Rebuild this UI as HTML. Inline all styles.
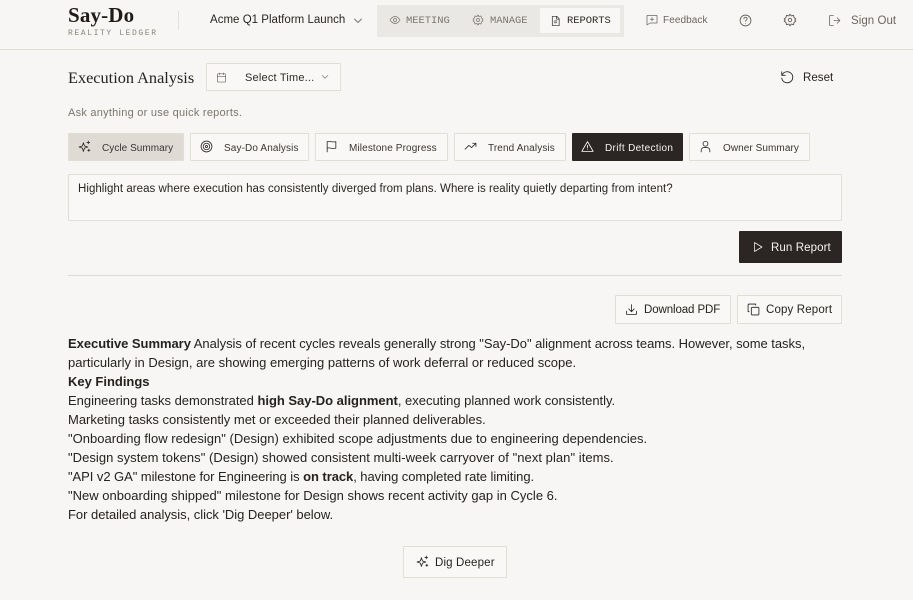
<!DOCTYPE html>
<html><head><meta charset="utf-8"><style>
html,body{margin:0;padding:0}
body{width:913px;height:600px;overflow:hidden;background:#f7f6f4;position:relative;font-family:"Liberation Sans",sans-serif;color:#231f1c}
.t{position:absolute;white-space:nowrap;line-height:1}
.b{position:absolute;box-sizing:border-box;border:1px solid #e2ded6;border-radius:1px;background:#f9f8f6}
svg{position:absolute;fill:none;stroke:currentColor;stroke-width:1.5;stroke-linecap:round;stroke-linejoin:round}
.q{font-size:10px;letter-spacing:.12px;top:144px;color:#3a3531}
.l{left:68px;font-size:13px;letter-spacing:-.01px;color:#26221f;height:19px;line-height:19px}
.l b{font-weight:700}
.m{font-family:"Liberation Mono",monospace;font-size:10.5px;letter-spacing:-.05px;top:16px}
</style></head><body>
<div style="position:absolute;left:0;top:49px;width:913px;height:1px;background:#dfdcd6"></div>
<div class="t" style="left:68px;top:3px;font:700 21px 'Liberation Serif',serif;letter-spacing:.15px;color:#1f1b18">Say-Do</div>
<div class="t" style="left:68px;top:29px;font:8px 'Liberation Mono',monospace;letter-spacing:1.6px;color:#8a847c">REALITY LEDGER</div>
<div style="position:absolute;left:178px;top:11px;width:1px;height:19px;background:#e2ded8"></div>
<div class="t" style="left:210px;top:15px;font-size:11.5px;letter-spacing:.02px;color:#292522">Acme Q1 Platform Launch</div>
<svg style="left:352px;top:15px;color:#4a4540" width="12" height="12" viewBox="0 0 24 24"><path d="M5 8l7 7 7-7"/></svg>
<div style="position:absolute;left:377px;top:5px;width:247px;height:32px;background:#e9e8e5"></div>
<div style="position:absolute;left:540px;top:8px;width:80px;height:25px;background:#f8f7f5"></div>
<svg style="left:389px;top:14px;color:#7b756e" width="12" height="12" viewBox="0 0 24 24" stroke-width="2"><path d="M2 12s4-7 10-7 10 7 10 7-4 7-10 7-10-7-10-7z"/><circle cx="12" cy="12" r="3"/></svg>
<div class="t m" style="left:406px;color:#7b756e">MEETING</div>
<svg style="left:472px;top:14px;color:#7b756e" width="12" height="12" viewBox="0 0 24 24" stroke-width="2"><circle cx="12" cy="12" r="3"/><path d="M12 2l2 3 4-1 1 4 3 2-2 2 2 2-3 2-1 4-4-1-2 3-2-3-4 1-1-4-3-2 2-2-2-2 3-2 1-4 4 1z"/></svg>
<div class="t m" style="left:490px;color:#7b756e">MANAGE</div>
<svg style="left:550px;top:15px;color:#2a2623" width="11" height="12" viewBox="0 0 24 24" stroke-width="2.2"><path d="M5 2h10l5 5v15H5z"/><path d="M14 2v6h6M9 12h6M9 16h6"/></svg>
<div class="t m" style="left:567px;color:#2a2623">REPORTS</div>
<svg style="left:646px;top:14px;color:#6c665f" width="12" height="12" viewBox="0 0 24 24" stroke-width="2"><path d="M2 3h20v15H8l-6 4z"/><path d="M12 7v7M8.5 10.5h7"/></svg>
<div class="t" style="left:663px;top:16px;font-size:10px;letter-spacing:.08px;color:#6c665f">Feedback</div>
<svg style="left:739px;top:14px;color:#5c5650" width="13" height="13" viewBox="0 0 24 24" stroke-width="1.8"><circle cx="12" cy="12" r="10"/><path d="M9 9a3 3 0 0 1 6 0c0 2-3 2.5-3 4.5M12 17.5v.1"/></svg>
<svg style="left:783px;top:13px;color:#5c5650" width="14" height="14" viewBox="0 0 24 24" stroke-width="1.8"><circle cx="12" cy="12" r="3"/><path d="M12 2l2 3 4-1 1 4 3 2-2 2 2 2-3 2-1 4-4-1-2 3-2-3-4 1-1-4-3-2 2-2-2-2 3-2 1-4 4 1z"/></svg>
<svg style="left:828px;top:14px;color:#6c665f" width="13" height="13" viewBox="0 0 24 24" stroke-width="1.8"><path d="M10 3H3v18h7M11 12h11M17 7l5 5-5 5"/></svg>
<div class="t" style="left:851px;top:16px;font-size:11.5px;letter-spacing:.05px;color:#6c665f">Sign Out</div>

<div class="t" style="left:68px;top:68px;font:16.3px 'Liberation Serif',serif;color:#26221f">Execution Analysis</div>
<div class="b" style="left:206px;top:63px;width:135px;height:28px"></div>
<svg style="left:216px;top:72px;color:#6d675f" width="11" height="11" viewBox="0 0 24 24" stroke-width="2"><rect x="3" y="4" width="18" height="18" rx="2"/><path d="M3 10h18M8 2v4M16 2v4"/></svg>
<div class="t" style="left:245px;top:73px;font-size:11px;letter-spacing:.2px;color:#2f2b27">Select Time...</div>
<svg style="left:320px;top:72px;color:#6d675f" width="10" height="10" viewBox="0 0 24 24"><path d="M5 8l7 7 7-7"/></svg>
<svg style="left:780px;top:70px;color:#26221f" width="14" height="14" viewBox="0 0 24 24" stroke-width="2"><path d="M3 3v6h6"/><path d="M3.5 9A9.5 9.5 0 1 1 3 14"/></svg>
<div class="t" style="left:803px;top:73px;font-size:11.5px;letter-spacing:.05px;color:#26221f">Reset</div>
<div class="t" style="left:68px;top:108px;font-size:11px;letter-spacing:.25px;color:#7b756e">Ask anything or use quick reports.</div>

<div class="b" style="left:68px;top:133px;width:116px;height:28px;background:#dfdbd4"></div>
<svg style="left:78px;top:140px;color:#2a2623" width="13" height="13" viewBox="0 0 24 24" stroke-width="2"><path d="M10 5l2 6 6 2-6 2-2 6-2-6-6-2 6-2z"/><path d="M19 2v5M16.5 4.5h5M20 17v4M18 19h4"/></svg>
<div class="t q" style="left:102px;letter-spacing:.05px">Cycle Summary</div>
<div class="b" style="left:190px;top:133px;width:119px;height:28px"></div>
<svg style="left:200px;top:140px;color:#2a2623" width="13" height="13" viewBox="0 0 24 24" stroke-width="2"><circle cx="12" cy="12" r="10"/><circle cx="12" cy="12" r="6"/><circle cx="12" cy="12" r="2"/></svg>
<div class="t q" style="left:224px">Say-Do Analysis</div>
<div class="b" style="left:315px;top:133px;width:133px;height:28px"></div>
<svg style="left:325px;top:140px;color:#2a2623" width="13" height="13" viewBox="0 0 24 24" stroke-width="2"><path d="M4 22V3c5-2 8 2 16 0v12c-8 2-11-2-16 0"/></svg>
<div class="t q" style="left:349px">Milestone Progress</div>
<div class="b" style="left:454px;top:133px;width:112px;height:28px"></div>
<svg style="left:464px;top:140px;color:#2a2623" width="13" height="13" viewBox="0 0 24 24" stroke-width="2"><path d="M2 17l7-7 5 4 8-8M16 6h6v6"/></svg>
<div class="t q" style="left:488px">Trend Analysis</div>
<div class="b" style="left:572px;top:133px;width:111px;height:28px;background:#2b2623;border-color:#2b2623"></div>
<svg style="left:581px;top:140px;color:#fff" width="13" height="13" viewBox="0 0 24 24" stroke-width="2"><path d="M12 3L1.5 21h21z"/><path d="M12 10v5M12 18v.1"/></svg>
<div class="t q" style="left:605px;color:#f5f3f0;letter-spacing:.33px">Drift Detection</div>
<div class="b" style="left:689px;top:133px;width:121px;height:28px"></div>
<svg style="left:699px;top:140px;color:#2a2623" width="13" height="13" viewBox="0 0 24 24" stroke-width="2"><circle cx="12" cy="7" r="4.5"/><path d="M4 22v-3a5 5 0 0 1 5-5h6a5 5 0 0 1 5 5v3"/></svg>
<div class="t q" style="left:723px;letter-spacing:.07px">Owner Summary</div>

<div class="b" style="left:68px;top:174px;width:774px;height:47px"></div>
<div class="t" style="left:78px;top:184px;font-size:11.5px;letter-spacing:.04px;color:#2a2623">Highlight areas where execution has consistently diverged from plans. Where is reality quietly departing from intent?</div>

<div style="position:absolute;left:739px;top:231px;width:103px;height:32px;background:#2b2623;border-radius:1px"></div>
<svg style="left:752px;top:241px;color:#f5f3f0" width="12" height="12" viewBox="0 0 24 24" stroke-width="2"><path d="M5 3l15 9-15 9z"/></svg>
<div class="t" style="left:771px;top:243px;font-size:11.5px;letter-spacing:.1px;color:#f5f3f0">Run Report</div>
<div style="position:absolute;left:68px;top:275px;width:774px;height:1px;background:#dfdbd3"></div>

<div class="b" style="left:615px;top:295px;width:116px;height:29px"></div>
<svg style="left:625px;top:303px;color:#26221f" width="13" height="13" viewBox="0 0 24 24" stroke-width="2"><path d="M3 15v6h18v-6M12 3v13M7 11l5 5 5-5"/></svg>
<div class="t" style="left:644px;top:305px;font-size:11.5px;letter-spacing:-.1px;color:#26221f">Download PDF</div>
<div class="b" style="left:737px;top:295px;width:105px;height:29px"></div>
<svg style="left:747px;top:303px;color:#26221f" width="13" height="13" viewBox="0 0 24 24" stroke-width="2"><rect x="8" y="8" width="14" height="14" rx="2"/><path d="M4 16H2V4a2 2 0 0 1 2-2h12v2"/></svg>
<div class="t" style="left:766px;top:305px;font-size:11.5px;letter-spacing:.15px;color:#26221f">Copy Report</div>

<div class="t l" style="top:334px;letter-spacing:-.04px"><b>Executive Summary</b> Analysis of recent cycles reveals generally strong "Say-Do" alignment across teams. However, some tasks,</div>
<div class="t l" style="top:353px;letter-spacing:.01px">particularly in Design, are showing emerging patterns of work deferral or reduced scope.</div>
<div class="t l" style="top:372px"><b>Key Findings</b></div>
<div class="t l" style="top:391px;letter-spacing:-.02px">Engineering tasks demonstrated <b>high Say-Do alignment</b>, executing planned work consistently.</div>
<div class="t l" style="top:410px">Marketing tasks consistently met or exceeded their planned deliverables.</div>
<div class="t l" style="top:429px;letter-spacing:.02px">"Onboarding flow redesign" (Design) exhibited scope adjustments due to engineering dependencies.</div>
<div class="t l" style="top:448px;letter-spacing:.045px">"Design system tokens" (Design) showed consistent multi-week carryover of "next plan" items.</div>
<div class="t l" style="top:467px;letter-spacing:-.06px">"API v2 GA" milestone for Engineering is <b>on track</b>, having completed rate limiting.</div>
<div class="t l" style="top:486px;letter-spacing:.015px">"New onboarding shipped" milestone for Design shows recent activity gap in Cycle 6.</div>
<div class="t l" style="top:505px;letter-spacing:-.03px">For detailed analysis, click 'Dig Deeper' below.</div>

<div class="b" style="left:403px;top:546px;width:104px;height:32px"></div>
<svg style="left:416px;top:555px;color:#26221f" width="13" height="13" viewBox="0 0 24 24" stroke-width="2"><path d="M10 5l2 6 6 2-6 2-2 6-2-6-6-2 6-2z"/><path d="M19 2v5M16.5 4.5h5M20 17v4M18 19h4"/></svg>
<div class="t" style="left:435px;top:558px;font-size:11.5px;letter-spacing:.15px;color:#26221f">Dig Deeper</div>
</body></html>
